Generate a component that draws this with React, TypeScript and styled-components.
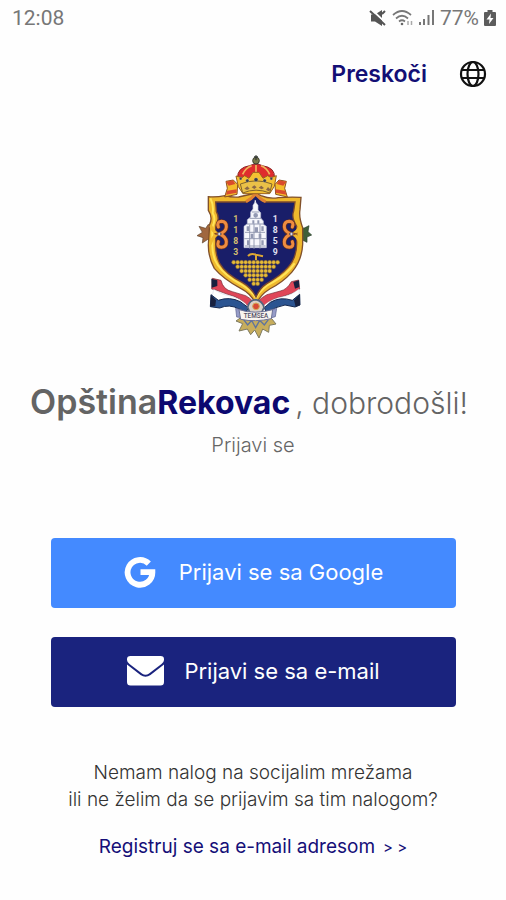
import React from "react";
import styled, { createGlobalStyle } from "styled-components";

const GlobalStyle = createGlobalStyle`
  * { box-sizing: border-box; }
  body {
    margin: 0;
    background: #fefefe;
    color: #555;
    font-family: Inter, "Open Sans", sans-serif;
  }
`;

const Screen = styled.div`
  display: flex;
  flex-direction: column;
  min-height: 100vh;
`;

const StatusBar = styled.div`
  display: flex;
  align-items: center;
  justify-content: space-between;
  height: 36px;
  padding: 0 10px 0 12px;
  font: 400 21px/24px Roboto, sans-serif;
  color: #777;
`;

const StatusIcons = styled.div`
  display: flex;
  align-items: center;
  gap: 5px;
  svg { display: block; }
`;

const Header = styled.header`
  display: flex;
  align-items: center;
  justify-content: flex-end;
  gap: 32px;
  height: 76px;
  padding: 0 19px;
`;

const SkipButton = styled.button`
  padding: 0;
  border: 0;
  background: none;
  color: #130f75;
  font: 600 23px/28px Inter, sans-serif;
  cursor: pointer;
`;

const IconButton = styled.button`
  display: flex;
  padding: 0;
  border: 0;
  background: none;
  color: #111;
  cursor: pointer;
`;

const Main = styled.main`
  display: flex;
  flex-direction: column;
  align-items: center;
  padding: 33px 24px 32px;
`;

const Title = styled.h1`
  margin: 35px 0 0;
  padding-right: 8px;
  font-size: 34px;
  line-height: 44px;
  font-weight: 600;
  color: #646464;
  white-space: nowrap;
`;

const Place = styled.span`
  color: #0c0870;
  font-size: 32px;
  font-weight: 700;
`;

const Greeting = styled.span`
  margin-left: 5px;
  font-size: 30px;
  font-weight: 300;
`;

const Subtitle = styled.p`
  margin: 8px 0 0;
  font-size: 20px;
  line-height: 24px;
  font-weight: 300;
  color: #666;
`;

const Actions = styled.div`
  display: flex;
  flex-direction: column;
  gap: 29px;
  align-self: stretch;
  margin: 81px 26px 0 27px;
`;

const LoginButton = styled.button<{ $color: string; $gap: number }>`
  display: flex;
  align-items: center;
  justify-content: center;
  gap: ${(p) => p.$gap}px;
  height: 70px;
  padding: 0 0 3px;
  border: 0;
  border-radius: 4px;
  background: ${(p) => p.$color};
  color: #fff;
  font: 400 22px/28px Inter, sans-serif;
  white-space: nowrap;
  cursor: pointer;
  svg { display: block; }
`;

const Question = styled.p`
  margin: 52px 0 0;
  font-size: 19px;
  line-height: 27px;
  font-weight: 300;
  color: #333;
  text-align: center;
`;

const RegisterLink = styled.a`
  margin-top: 20px;
  font-size: 19px;
  line-height: 27px;
  font-weight: 400;
  color: #150f78;
  text-decoration: none;
  white-space: nowrap;
`;

const Arrows = styled.span`
  margin-left: 8px;
  font-size: 15px;
`;

function MutedIcon() {
  return (
    <svg width="18" height="18" viewBox="0 0 18 18" aria-hidden="true">
      <path d="M2 5.500h4l7-4.500v16l-7-4.500H2z" fill="#555" />
      <path d="M2 0l16 15" stroke="#fefefe" strokeWidth="2" />
      <path d="M1 2l15 14M13 5l3-3" stroke="#555" strokeWidth="2" />
    </svg>
  );
}

function WifiIcon() {
  return (
    <svg width="22" height="18" viewBox="0 0 22 18" fill="none" stroke="#777" strokeWidth="1.700" aria-hidden="true">
      <path d="M1 6Q10 -2 19 6M4 9.500Q10 4 16 9.500M7 12.500Q10 10 13 12.500" />
      <circle cx="10" cy="15" r="1.300" fill="#666" stroke="none" />
      <path d="M16 12v4M19.500 12v4" stroke="#aaa" strokeWidth="1.500" />
    </svg>
  );
}

function SignalIcon() {
  return (
    <svg width="16" height="18" viewBox="0 0 16 18" fill="#777" aria-hidden="true">
      <path d="M0 13h2v3H0zM4 10h2v6H4zM8.500 6h2v10h-2zM13 1h2v15h-2z" />
    </svg>
  );
}

function BatteryIcon() {
  return (
    <svg width="12" height="18" viewBox="0 0 12 18" aria-hidden="true">
      <path d="M3.500 1h5v2H11a1 1 0 0 1 1 1v12a1 1 0 0 1-1 1H1a1 1 0 0 1-1-1V4a1 1 0 0 1 1-1h2.500z" fill="#5c5c5c" />
      <path d="M7 4.500L2.500 10.500h3L5 15l4.500-6h-3z" fill="#fff" />
    </svg>
  );
}

function GlobeIcon() {
  return (
    <svg width="28" height="28" viewBox="0 0 28 28" fill="none" stroke="currentColor" strokeWidth="2.200" aria-hidden="true">
      <circle cx="14" cy="14" r="12" />
      <ellipse cx="14" cy="14" rx="5.500" ry="12" />
      <path d="M3 10h22M3 18h22" />
    </svg>
  );
}

function GoogleIcon() {
  return (
    <svg width="32" height="32" viewBox="0 0 32 32" aria-hidden="true">
      <path
        d="M24.800 7.600A12.400 12.400 0 1 0 28.400 16.200H16.500"
        fill="none"
        stroke="#fff"
        strokeWidth="5.800"
      />
    </svg>
  );
}

function MailIcon() {
  return (
    <svg width="37" height="30" viewBox="0 0 37 30" fill="#fff" aria-hidden="true">
      <path d="M3.500 0h30Q37 0 37 3v1Q37 6 34.500 8L22 17.500Q18.500 20 15 17.500L2.500 8Q0 6 0 4V3Q0 0 3.500 0z" />
      <path d="M0 8.500L13.500 19Q18.500 22.500 23.500 19L37 8.500V26Q37 29.500 33.500 29.500h-30Q0 29.500 0 26z" />
    </svg>
  );
}

const grapeRows = [
  { y: 352, from: 130, count: 12 },
  { y: 365, from: 142, count: 10 },
  { y: 378, from: 154, count: 8 },
  { y: 391, from: 166, count: 6 },
  { y: 404, from: 178, count: 4 },
  { y: 416, from: 190, count: 2 },
];

const scrollPath =
  "M84 246Q78 230 93 229Q109 230 108 246Q107 260 88 267Q107 275 108 290Q109 306 93 307Q78 306 84 290";

function Scroll() {
  return (
    <g fill="none" strokeLinecap="round">
      <path d="M62 244Q68 262 84 267Q68 272 60 296" stroke="#efb82d" strokeWidth="9" />
      <path d={scrollPath} stroke="#69331c" strokeWidth="13" />
      <path d={scrollPath} stroke="#ee8c41" strokeWidth="9" />
      <circle cx="87" cy="267" r="5" fill="#d9dce8" stroke="#454050" strokeWidth="2" />
    </g>
  );
}

function Crest() {
  return (
    <svg width="132" height="200" viewBox="-10 0 396 600" role="img" aria-label="Grb opštine Rekovac">
      {/* foliage behind the shield */}
      <path d="M84 266L62 292L54 282L36 294L38 278L20 272L36 262L26 244L46 250L54 238L66 252z" fill="#a0673f" stroke="#604630" strokeWidth="2" />
      <path d="M312 266L330 240L340 250L356 242L353 260L364 270L350 276L350 292L334 284L322 296z" fill="#3f6038" stroke="#263d2a" strokeWidth="2" />
      {/* ribbons */}
      <g strokeLinejoin="round">
        <path d="M66 400L92 406Q98 434 126 440L166 452Q190 466 192 478L168 480Q152 458 112 448L80 436L64 432z" fill="#df4658" stroke="#742832" strokeWidth="2" />
        <path d="M325 405L303 410Q290 434 270 438L230 449Q202 464 198 478L226 480Q242 462 278 454L314 442L328 432z" fill="#df4658" stroke="#742832" strokeWidth="2" />
        <path d="M70 433Q94 448 108 450Q142 456 168 478L166 488Q128 462 94 466L64 462z" fill="#fff" stroke="#b7bdd0" />
        <path d="M326 432Q300 451 284 454Q246 460 222 480L228 490Q258 464 292 468L328 464z" fill="#fff" stroke="#b7bdd0" />
        <path d="M62 449L84 466Q118 454 150 470L174 488L168 502L146 492Q118 476 88 489L60 485z" fill="#2b5491" stroke="#152950" strokeWidth="3" />
        <path d="M328 448L306 466Q270 454 240 472L222 488L228 503Q258 484 284 480L314 486L329 480z" fill="#2b5491" stroke="#152950" strokeWidth="3" />
        <path d="M63 401l18 5v17l-17 5zM326 406l-17 5 5 20 13-5zM62 450l15 16-2 17-15 2zM328 448l-17 18 5 19 13-5z" fill="#18213f" />
      </g>
      {/* shield */}
      <path d="M54 155Q78 157 104 152Q126 158 145 156L184 147L197 145L212 152Q238 163 264 158Q300 155 332 157L329 194Q325 216 337 248V298Q335 346 304 382Q277 412 238 432Q210 449 197 478Q182 445 151 430Q99 402 72 370Q54 338 54 300L58 238Q68 217 54 196z" fill="#efb82d" stroke="#80502a" strokeWidth="4" />
      <path d="M60 160Q71 181 67 204Q78 222 66 246V302Q67 340 82 360Q105 393 151 417Q182 436 197 459Q214 427 247 412Q290 388 313 355" fill="none" stroke="#ffe45a" strokeWidth="6" />
      <path d="M76 171H170L196 151L223 171H314L310 198Q302 217 319 244V296Q319 339 292 368Q272 391 229 416Q209 429 197 456Q184 429 157 413Q105 386 88 355Q75 331 76 298V246Q90 220 78 200z" fill="#191e69" stroke="#7c482d" strokeWidth="4" />
      <path d="M167 170Q183 163 196 146Q209 164 226 170" fill="none" stroke="#df8134" strokeWidth="9" />
      <Scroll />
      <g transform="translate(390 0) scale(-1 1)">
        <Scroll />
      </g>
      {/* church tower */}
      <path d="M195 166v15" stroke="#fff" strokeWidth="4" />
      <path d="M188 181l7-11 8 11v14l8 8v16l8 9v10l9 6v64h-67v-64l10-8v-12l10-8v-15l7-9z" fill="#f7f7fc" stroke="#bec3d6" strokeWidth="2" />
      <path d="M185 201h22M178 220h35M170 237h51M164 262h60M162 281h65M164 303h62M178 239v72M191 237v75M209 238v73" stroke="#848ba6" strokeWidth="2.500" />
      <path d="M196 204a7 7 0 1 1 0 14 7 7 0 0 1 0-14M186 226h6v10h-6zM201 226h6v10h-6zM169 244h7v14h-7zM213 244h7v14h-7zM193 247h10v14h-10zM181 266h8v14h-8zM205 266h8v14h-8zM170 286h7v14h-7zM213 286h7v14h-7z" fill="#9298b2" />
      {/* founding years */}
      <g fontFamily="Roboto, sans-serif" fontSize="26" fontWeight="700">
        <g fill="#d4bd70">
          <text x="129" y="230">1</text>
          <text x="129" y="263">1</text>
          <text x="129" y="296">8</text>
          <text x="129" y="329">3</text>
        </g>
        <g fill="#e1e2f2">
          <text x="247" y="230">1</text>
          <text x="247" y="263">8</text>
          <text x="247" y="296">5</text>
          <text x="247" y="329">9</text>
        </g>
      </g>
      {/* grapes */}
      <g fill="#e5ba38" stroke="#765d37" strokeWidth="1.500">
        {grapeRows.map((row) =>
          Array.from({ length: row.count }, (_, i) => (
            <circle key={`${row.y}-${i}`} cx={row.from + i * 12} cy={row.y} r="6" />
          ))
        )}
      </g>
      <path d="M173 333Q182 323 196 329L218 334M197 329v17" fill="none" stroke="#dca735" strokeWidth="6" />
      {/* crown */}
      <path d="M107 109l22-4 13 13-2 30-37 8 8-26zM288 109l-22-4-12 13 2 30 35 8-8-26z" fill="#f4bd2c" stroke="#8c5121" strokeWidth="3" />
      <path d="M107 110l21-4 7 11-20 5zM288 110l-22-4-7 11 20 5zM111 137l28-4v10l-32 6zM284 137l-28-4v10l32 6z" fill="#da4b2d" />
      <path d="M142 99Q140 68 178 62Q197 52 216 62Q256 68 252 99L245 128H149z" fill="#df2c2d" stroke="#8a2523" strokeWidth="3" />
      <path d="M197 60V96M157 88Q166 68 184 62M238 88Q229 68 212 62" fill="none" stroke="#f0b65b" strokeWidth="5" />
      <path d="M137 93l18 5 8-6 13 8 12-18h18l12 18 14-8 10 6 16-6-6 32-14 22H158l-14-21z" fill="#f5c131" stroke="#98601f" strokeWidth="3" />
      <path d="M150 117Q197 98 245 117L238 144Q197 127 157 144z" fill="#eac148" stroke="#80632c" strokeWidth="3" />
      <g fill="#393d49" stroke="#d1c6a0" strokeWidth="1">
        <circle cx="151" cy="101" r="4" />
        <circle cx="171" cy="107" r="5" />
        <circle cx="197" cy="104" r="6" />
        <circle cx="223" cy="107" r="5" />
        <circle cx="243" cy="101" r="4" />
      </g>
      <path d="M162 131l9-7 7 7-8 4zM184 127l8-6 7 6-7 5zM205 128l8-6 8 7-7 4zM227 134l6-8 8 8-6 5z" fill="#8a6847" />
      <circle cx="197" cy="47" r="10" fill="#787a4c" stroke="#3f4034" strokeWidth="3" />
      <path d="M197 31v15M191 36h12" stroke="#383c37" strokeWidth="4" />
      {/* lower ornament */}
      <path d="M151 518l-14 10 20 8-11 22 25-6 10 17 12-14 13 24 11-27 18 10 2-21 20-4-17-21z" fill="#c7ad5c" stroke="#7d7a62" strokeWidth="3" />
      <path d="M160 524l12 16 12-14 12 22 12-22 14 14 12-16" fill="none" stroke="#5d739f" strokeWidth="4" />
      <path d="M172 486Q177 465 197 464Q216 468 221 487L213 505H179z" fill="#dad1c7" stroke="#53647d" strokeWidth="5" />
      <circle cx="197" cy="484" r="10" fill="#d64a35" stroke="#d3aa54" strokeWidth="3" />
      <path d="M136 490l19 5 2 23-18-2zM239 495l20-5-4 25-18 5z" fill="#969cc8" stroke="#575d8c" strokeWidth="2" />
      <path d="M146 494Q193 509 247 494L243 521Q195 532 151 523z" fill="#f8f4ef" stroke="#6c7196" strokeWidth="3" />
      <text x="197" y="520" textAnchor="middle" fontFamily="Roboto, sans-serif" fontSize="19" fontWeight="500" fill="#545064">TEMSEA</text>
    </svg>
  );
}

export default function App() {
  return (
    <Screen>
      <GlobalStyle />
      <StatusBar>
        <span>12:08</span>
        <StatusIcons>
          <MutedIcon />
          <WifiIcon />
          <SignalIcon />
          <span>77%</span>
          <BatteryIcon />
        </StatusIcons>
      </StatusBar>
      <Header>
        <SkipButton type="button">Preskoči</SkipButton>
        <IconButton type="button" aria-label="Jezik">
          <GlobeIcon />
        </IconButton>
      </Header>
      <Main>
        <Crest />
        <Title>
          Opština<Place>Rekovac</Place>
          <Greeting>, dobrodošli!</Greeting>
        </Title>
        <Subtitle>Prijavi se</Subtitle>
        <Actions>
          <LoginButton type="button" $color="#448aff" $gap={23}>
            <GoogleIcon />
            Prijavi se sa Google
          </LoginButton>
          <LoginButton type="button" $color="#1a237e" $gap={20}>
            <MailIcon />
            Prijavi se sa e-mail
          </LoginButton>
        </Actions>
        <Question>
          Nemam nalog na socijalim mrežama
          <br />
          ili ne želim da se prijavim sa tim nalogom?
        </Question>
        <RegisterLink href="#registracija">
          Registruj se sa e-mail adresom
          <Arrows>&gt; &gt;</Arrows>
        </RegisterLink>
      </Main>
    </Screen>
  );
}
